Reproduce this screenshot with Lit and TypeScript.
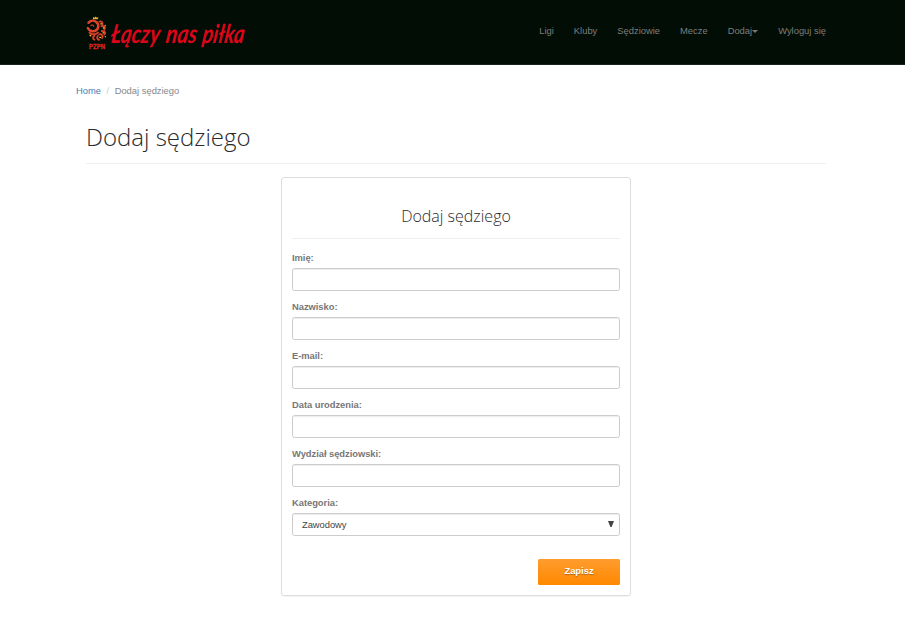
import { LitElement, html, css, svg } from "lit";
import { customElement } from "lit/decorators.js";

const NAV = ["Ligi", "Kluby", "Sędziowie", "Mecze", "Dodaj", "Wyloguj się"];
const FIELDS = ["Imię:", "Nazwisko:", "E-mail:", "Data urodzenia:", "Wydział sędziowski:"];

// Wordmark words: text, left edge, width
const WORDS: [string, number, number][] = [
  ["Łączy", 24, 49],
  ["nas", 79, 31],
  ["piłka", 115.5, 42],
];

@customElement("site-logo")
export class SiteLogo extends LitElement {
  static styles = css`
    :host { display: block; height: 36px; }
    svg { display: block; overflow: visible; }
    .word { font: italic bold 26px Lato, sans-serif; fill: #dc0519; }
    .pzpn { font: bold 6.4px "Liberation Sans", sans-serif; fill: #d8251d; stroke: #d8251d; stroke-width: 0.3; }
  `;
  render() {
    return html`<svg width="160" height="36" viewBox="0 0 160 36">
      <g fill="none" stroke-linecap="round">
        <path d="M2.5 5.8C4.5 3.4 8 3.2 10.5 5.2C13.5 8 12.6 12.8 8.6 14C5.4 14.8 3 13.2 1.8 11" stroke="#df4429" stroke-width="2.5"/>
        <path d="M5 8.6C6.4 7.4 7.4 8 7.6 9.4" stroke="#c9301f" stroke-width="1.3"/>
        <path d="M3.6 15.8C5.8 18 9.8 17.8 12 15.6" stroke="#d73b26" stroke-width="2"/>
        <path d="M13.4 4.6C15.4 3.8 17 5.2 16.4 7.4M15.4 9.2C18 8.4 19.6 10.4 18.4 12.4M15.8 14C18.8 13.8 20 16 18.4 17.6M13.2 17.4C16 16.8 17.6 19 16 21M8.4 18.8C6.6 19.8 6.6 22 8.4 22.6M11.8 19C10.6 20.6 11.2 22.4 13 22.8" stroke="#d6402a" stroke-width="1.9"/>
        <path d="M14.6 6.8h.8M17.4 11h.6M17 15.8h.8M13.8 20.4h.6M4 18.4l.8.4M19.2 8.4v.4M19.4 19.6v.2" stroke="#eeb52b" stroke-width="1.3"/>
      </g>
      <path d="M7 0l1.5.8L9.7-.4l1.2 1.2L12.4 0l-.5 2.2h-5z" fill="#e2b32b"/>
      <text class="pzpn" x="3" y="31.6" textLength="16" lengthAdjust="spacingAndGlyphs">PZPN</text>
      ${WORDS.map(([t, x, w]) => svg`<g transform="translate(${x} 25.5) skewX(-8)"><text class="word" textLength=${w} lengthAdjust="spacingAndGlyphs">${t}</text></g>`)}
    </svg>`;
  }
}

@customElement("app-root")
export class AppRoot extends LitElement {
  static styles = css`
    :host {
      display: block; min-height: 623px; background: #fff; color: #777;
      font: 9.38px/13px "Liberation Sans", Arial, sans-serif;
    }
    * { box-sizing: border-box; }
    header {
      height: 65px; background: #020d06; border-bottom: 1px solid #16231b;
      display: flex; justify-content: space-between; align-items: flex-start;
      padding: 17px 79px 0 86px;
    }
    nav { display: flex; gap: 20px; padding-top: 8px; color: #7c7e7c; }
    nav a { display: flex; align-items: center; white-space: nowrap; }
    .caret { border: 3px solid transparent; border-top-color: #777; border-bottom: 0; }
    .crumbs { display: flex; padding: 20px 0 0 76px; height: 46px; color: #888; }
    .crumbs .home { color: #447fb7; }
    .crumbs .sep { color: #ccc; padding: 0 5.5px; }
    h1, h2 { margin: 0; font-family: "Open Sans", sans-serif; font-weight: 300; color: #2b2b2b; border-bottom: 1px solid #eee; }
    h1 { margin: 0 79px 0 86px; height: 53px; padding-top: 9px; font-size: 24px; line-height: 34px; }
    form {
      width: 350px; height: 419px; margin: 13px 0 0 281px; padding: 0 10px;
      border: 1px solid #ddd; border-radius: 3px; box-shadow: 0 1px 1px rgba(0,0,0,.05);
    }
    h2 { height: 61px; padding-top: 26px; margin-bottom: 12px; text-align: center; font-size: 16px; line-height: 24px; }
    label { display: block; height: 49px; font-weight: bold; line-height: 14px; letter-spacing: -.04px; }
    .control {
      display: flex; justify-content: space-between; align-items: center;
      width: 100%; height: 23px; margin-top: 3px; padding: 0 5px 0 9px;
      border: 1px solid #ccc; border-radius: 2.5px; background: #fff;
      box-shadow: inset 0 1px 1px rgba(0,0,0,.075);
      font: 9.38px "Liberation Sans", sans-serif; color: #444;
    }
    button {
      display: block; width: 82px; height: 26px; margin: 14px 0 0 auto; padding: 0 0 2px;
      border: 0; border-radius: 1.5px; background: linear-gradient(#ff9d2e, #ff8800);
      color: #fff; font: bold 9.38px "Liberation Sans", sans-serif;
      text-shadow: 0 1px 1px rgba(0,0,0,.3);
    }
  `;
  render() {
    return html`
      <header>
        <site-logo></site-logo>
        <nav>${NAV.map((n) => html`<a>${n}${n === "Dodaj" ? html`<i class="caret"></i>` : ""}</a>`)}</nav>
      </header>
      <div class="crumbs"><a class="home">Home</a><span class="sep">/</span><span>Dodaj sędziego</span></div>
      <h1>Dodaj sędziego</h1>
      <form>
        <h2>Dodaj sędziego</h2>
        ${FIELDS.map((f) => html`<label>${f}<input class="control" /></label>`)}
        <label>Kategoria:
          <span class="control"><span>Zawodowy</span>
            <svg width="6" height="7" viewBox="0 0 6 7"><path d="M0 0h6L3.6 6H2.4z" fill="#444"/></svg>
          </span>
        </label>
        <button type="button">Zapisz</button>
      </form>`;
  }
}
